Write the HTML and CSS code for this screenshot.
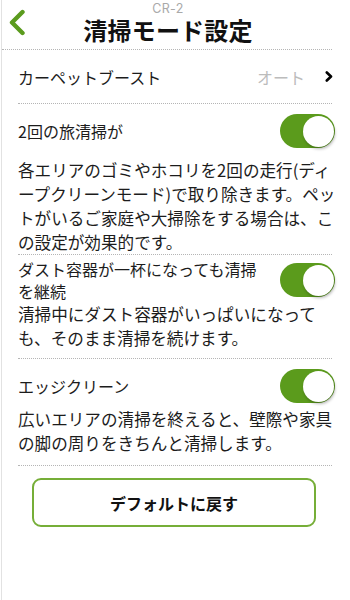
FILE: index.html
```html
<!DOCTYPE html>
<html lang="ja">
<head>
<meta charset="utf-8">
<link rel="stylesheet" href="styles.css">
</head>
<body>
<div class="page">
  <div class="content">
    <header class="header">
      <a class="back" aria-label="戻る">
        <svg width="20" height="28" viewBox="0 0 20 28"><polyline points="15.5,3 5,13.5 15.5,24" fill="none" stroke="#5b9b1e" stroke-width="4.4" stroke-linecap="round" stroke-linejoin="round"/></svg>
      </a>
      <div class="titles">
        <div class="model">CR-2</div>
        <h1 class="title">清掃モード設定</h1>
      </div>
      <div class="spacer"></div>
    </header>

    <div class="row carpet">
      <span class="label">カーペットブースト</span>
      <span class="value">オート
        <svg class="chev" width="8" height="11" viewBox="0 0 8 11"><polyline points="1.8,1.5 6,5.5 1.8,9.5" fill="none" stroke="#000" stroke-width="2.6" stroke-linecap="round" stroke-linejoin="round"/></svg>
      </span>
    </div>

    <section class="section s1">
      <div class="toggle-row">
        <span class="label">2回の旅清掃が</span>
        <span class="toggle"><span class="knob"></span></span>
      </div>
      <p class="desc">各エリアのゴミやホコリを2回の走行(ディ<br>ープクリーンモード)で取り除きます。ペッ<br>トがいるご家庭や大掃除をする場合は、こ<br>の設定が効果的です。</p>
    </section>

    <section class="section s2">
      <div class="toggle-row">
        <span class="label">ダスト容器が一杯になっても清掃<br>を継続</span>
        <span class="toggle"><span class="knob"></span></span>
      </div>
      <p class="desc">清掃中にダスト容器がいっぱいになって<br>も、そのまま清掃を続けます。</p>
    </section>

    <section class="section s3">
      <div class="toggle-row">
        <span class="label">エッジクリーン</span>
        <span class="toggle"><span class="knob"></span></span>
      </div>
      <p class="desc">広いエリアの清掃を終えると、壁際や家具<br>の脚の周りをきちんと清掃します。</p>
    </section>

    <div class="actions">
      <button class="reset">デフォルトに戻す</button>
    </div>
  </div>
</div>
</body>
</html>
```
FILE: styles.css
```css
html, body {
  margin: 0;
  padding: 0;
  background: #fff;
}
body {
  font-family: "Noto Sans CJK JP", "Noto Sans", sans-serif;
  color: #1c1c1c;
}
.page {
  width: 348px;
  height: 600px;
  margin-left: 1px;
  border-left: 1px solid #e2e2e2;
  box-sizing: border-box;
}
.content {
  padding: 0 17px 0 16px;
}
.header {
  display: grid;
  grid-template-columns: 30px 1fr 30px;
  height: 49px;
  border-bottom: 1px dotted #b5b5b5;
  margin: 0 0 0 -16px;
}
.back {
  display: flex;
  align-items: flex-start;
  padding: 9px 0 0 5px;
}
.titles {
  display: flex;
  flex-direction: column;
  align-items: center;
  margin-left: 2px;
}
.model {
  font-family: "Inter", "Lato", sans-serif;
  font-size: 12.5px;
  line-height: 12px;
  color: #a9a9a9;
  margin-top: 3px;
  letter-spacing: 0.3px;
}
.title {
  margin: 3px 0 0;
  font-size: 24px;
  line-height: 24px;
  font-weight: 700;
  color: #111;
  letter-spacing: 0.2px;
}
.row {
  display: flex;
  align-items: center;
  justify-content: space-between;
  border-bottom: 1px dotted #b5b5b5;
}
.carpet {
  height: 53px;
}
.label {
  font-size: 16px;
  line-height: 22px;
  color: #1c1c1c;
}
.value {
  display: flex;
  align-items: center;
  gap: 20px;
  font-size: 16px;
  color: #bcbcbc;
}
.chev {
  margin-right: -1px;
}
.section {
  border-bottom: 1px dotted #b5b5b5;
}
.toggle-row {
  display: flex;
  align-items: center;
  justify-content: space-between;
}
.toggle {
  flex: none;
  width: 55px;
  height: 34px;
  border-radius: 17px;
  background: #5b9b1c;
  display: flex;
  align-items: center;
  justify-content: flex-end;
  padding-right: 1px;
  box-sizing: border-box;
  margin-right: -3px;
}
.knob {
  width: 31px;
  height: 31px;
  border-radius: 50%;
  background: #fff;
  box-shadow: 1px 2px 3px rgba(0, 0, 0, 0.28);
}
.desc {
  margin: 0;
  font-size: 16.6px;
  line-height: 24px;
  color: #1c1c1c;
  white-space: nowrap;
}
.s1 {
  padding: 10px 0 0;
}
.s1 .desc {
  margin-top: 10px;
}
.s2 {
  padding: 3px 0 8px;
}
.s3 {
  padding: 10px 0 10px;
}
.s3 .desc {
  margin-top: 4px;
}
.actions {
  padding: 12px 0 0 14px;
}
.reset {
  display: block;
  width: 284px;
  height: 49px;
  border: 2.5px solid #76ae38;
  border-radius: 9px;
  background: #fff;
  font-family: "Noto Sans CJK JP", sans-serif;
  font-size: 16px;
  font-weight: 700;
  color: #111;
  padding: 0;
}
```
